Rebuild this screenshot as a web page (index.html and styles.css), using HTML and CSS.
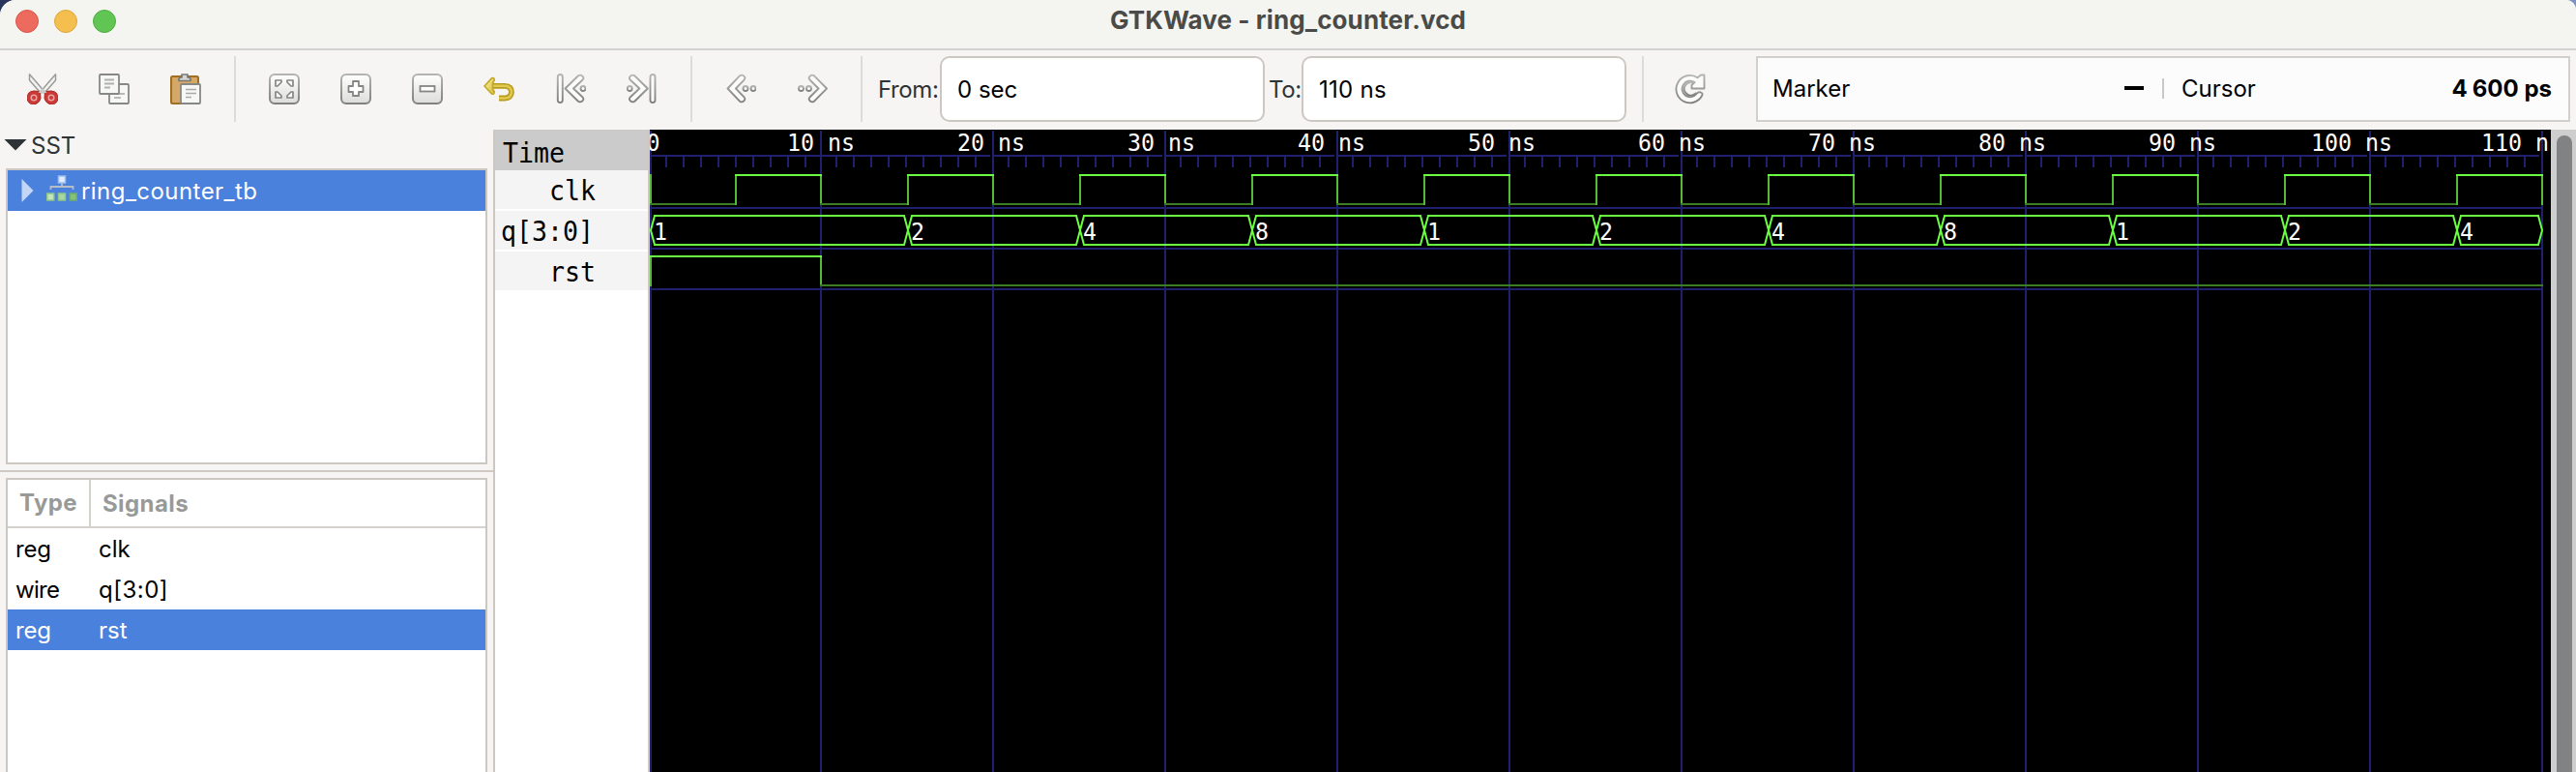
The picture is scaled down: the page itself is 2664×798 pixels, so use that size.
FILE: index.html
```html
<!DOCTYPE html>
<html lang="en">
<head>
<meta charset="utf-8">
<title>GTKWave - ring_counter.vcd</title>
<link rel="stylesheet" href="styles.css">
</head>
<body>
<div class="desktop">
<div class="window">
  <header class="titlebar">
    <div class="lights"><span class="light red"></span><span class="light amber"></span><span class="light green"></span></div>
    <h1 class="title">GTKWave - ring_counter.vcd</h1>
  </header>

  <svg class="defs" width="0" height="0" aria-hidden="true">
    <defs>
      <linearGradient id="btn" x1="0" y1="0" x2="0" y2="1"><stop offset="0" stop-color="#fff"/><stop offset="1" stop-color="#dcdcda"/></linearGradient>
      <linearGradient id="edge" x1="0" y1="0" x2="0" y2="1"><stop offset="0" stop-color="#b4b5b1"/><stop offset="1" stop-color="#80817e"/></linearGradient>
      <linearGradient id="gold" x1="0" y1="0" x2="1" y2="1"><stop offset="0" stop-color="#fbf0a0"/><stop offset="1" stop-color="#d8bc3c"/></linearGradient>
    </defs>
  </svg>

  <div class="toolbar">
    <div class="tools">
      <svg class="icon" viewBox="0 0 32 32">
        <path d="M2.500.8V7L14 20l3-2.500zM29.500.8V7L18 20l-3-2.500z" fill="#f3f4f2" stroke="#9a9c98" stroke-width="1.500" stroke-linejoin="round"/>
        <path d="M13.500 18.500 7 18Q0 18.500 0 25.500q1 6.500 7 6.500 5.500-1 7-6.500zM18.500 18.500l6.500-.5q7 .5 7 7.500-1 6.500-7 6.500-5.500-1-7-6.500z" fill="#c93a37" stroke="#ad2423"/>
        <path d="M11.500 19.500 16 15l4.500 4.500-4.500 1.500z" fill="#c9cac7"/>
        <circle cx="7" cy="25" r="2.800" fill="#c93a37" stroke="#e9a5a3" stroke-width="1.500"/><circle cx="25" cy="25" r="2.800" fill="#c93a37" stroke="#e9a5a3" stroke-width="1.500"/>
      </svg>
      <svg class="icon" viewBox="0 0 32 32">
        <rect x="11" y="11" width="20" height="20" rx="1" fill="#f7f7f6" stroke="#868885" stroke-width="1.800"/>
        <path d="M16 21h11M16 25h7" stroke="#b9bab8" stroke-width="1.800"/>
        <rect x="1" y="1" width="20" height="20" rx="1" fill="#f7f7f6" stroke="#868885" stroke-width="1.800"/>
        <path d="M6 6.500h10M6 10.500h10M6 14.500h6" stroke="#b0b1af" stroke-width="1.800"/>
      </svg>
      <svg class="icon" viewBox="0 0 32 32">
        <rect x="1" y="3" width="28" height="28" rx="1.500" fill="#d6a866" stroke="#a06f24" stroke-width="2"/>
        <path d="M9 7.500V6q0-2 3-2V1h6v3q3 0 3 2v1.500z" fill="#d5d6d3" stroke="#777975" stroke-width="1.700" stroke-linejoin="round"/>
        <rect x="11" y="11" width="20" height="20" rx="1" fill="#f7f7f6" stroke="#868885" stroke-width="1.800"/>
        <path d="M16 16.500h11M16 20.500h11M16 24.500h6" stroke="#a9aaa7" stroke-width="1.600"/>
      </svg>
    </div>
    <div class="tools six">
      <svg class="icon" viewBox="0 0 32 32">
        <rect x="1" y="1" width="30" height="30" rx="5" fill="url(#btn)" stroke="url(#edge)" stroke-width="2"/>
        <path d="M7 7h6v2l-4 4H7zM25 7h-6v2l4 4h2zM7 25h6v-2l-4-4H7zM25 25h-6v-2l4-4h2z" fill="#fff" stroke="#858683" stroke-width="1.700" stroke-linejoin="round"/>
      </svg>
      <svg class="icon" viewBox="0 0 32 32">
        <rect x="1" y="1" width="30" height="30" rx="5" fill="url(#btn)" stroke="url(#edge)" stroke-width="2"/>
        <path d="M13 8h6v5h4.500v6H19v4h-6v-4H8.500v-6H13z" fill="#fff" stroke="#858683" stroke-width="1.800" stroke-linejoin="round"/>
      </svg>
      <svg class="icon" viewBox="0 0 32 32">
        <rect x="1" y="1" width="30" height="30" rx="5" fill="url(#btn)" stroke="url(#edge)" stroke-width="2"/>
        <rect x="8.500" y="13" width="15" height="5.500" fill="#fff" stroke="#858683" stroke-width="1.800"/>
      </svg>
      <svg class="icon" viewBox="0 0 32 32">
        <path d="M9 12.800H22q7 .3 7 6.500-.5 6-7 6.200H16" fill="none" stroke="#b89c22" stroke-width="5.800"/>
        <path d="M9 12.800H22q7 .3 7 6.500-.5 6-7 6.200H16" fill="none" stroke="#e0c94f" stroke-width="2.600"/>
        <path d="M1 13 8.500 4.800Q11 4 11.300 6.500L9.500 10v6l1.800 3Q11 22 8.500 21z" fill="url(#gold)" stroke="#c4a92c" stroke-width="1.700" stroke-linejoin="round"/>
      </svg>
      <svg class="icon outline" viewBox="0 0 32 32">
        <rect x="2.800" y="1" width="5" height="29" rx="2.500"/>
        <path d="M10.500 15.500 24 2.300Q27 .5 29 3.500 30 5 28.300 6.800L19 15.500l9.300 8.700Q30 26 29 27.500 27 30.500 24 28.700z"/><circle cx="29" cy="15.500" r="2.500"/>
      </svg>
      <svg class="icon outline" viewBox="0 0 32 32">
        <rect x="24.500" y="1" width="5" height="29" rx="2.500"/>
        <path d="M21.800 15.500 8.300 2.300Q5.300.5 3.300 3.500 2.300 5 4 6.800l9.300 8.700L4 24.200Q2.300 26 3.300 27.500q2 3 5 1.200z"/><circle cx="3.200" cy="15.500" r="2.500"/>
      </svg>
    </div>
    <div class="tools two">
      <svg class="icon outline" viewBox="0 0 32 32">
        <path d="M2.500 15.500 15 2.300Q18 .5 20 3.500 21 5 19.300 6.800L11 15.500l8.300 8.700Q21 26 20 27.500 18 30.500 15 28.700z"/><circle cx="21" cy="15.500" r="2.500"/><circle cx="29" cy="15.500" r="2.500"/>
      </svg>
      <svg class="icon outline" viewBox="0 0 32 32">
        <path d="M31 15.500 18 2.300Q15 .5 13 3.500 12 5 13.700 6.800L22.500 15.500l-8.800 8.700Q12 26 13 27.500q2 3 5 1.200z"/><circle cx="4.500" cy="15.500" r="2.500"/><circle cx="12.500" cy="15.500" r="2.500"/>
      </svg>
    </div>
    <label class="field"><span class="lbl from">From:</span><span class="entry"><span class="zsec">0 sec</span></span></label>
    <label class="field to"><span class="lbl">To:</span><span class="entry"><span class="ns">110 ns</span></span></label>
    <div class="tools one">
      <svg class="icon outline" viewBox="0 0 32 32">
        <path d="M23.500 4.300A14.200 14.200 0 1 0 28.200 22.800Q29.300 20 26.500 19.300 24 19 22.500 21A8.300 8.300 0 1 1 20.500 9L17.500 12v3.500H30.500V1.500H27z"/>
        <path d="M20.500 9.500Q17 8.500 13.500 10 8.500 13 10 18q3 5.500 8 4.500 3-1 4.500-2.500" fill="none"/>
      </svg>
    </div>
    <div class="readout">
      <span class="marker">Marker</span><span class="dash"></span><span class="bar"></span><span class="cursor">Cursor</span><b class="time">4<i class="thin"></i>600 ps</b>
    </div>
  </div>

  <main class="body">
    <aside class="side">
      <div class="sst"><svg width="24" height="13" viewBox="0 0 24 13"><path d="M.5 1h23L12 12.500z" fill="#2e3436"/></svg><span>SST</span></div>
      <div class="frame tree">
        <div class="node">
          <svg class="arrow" width="13" height="26" viewBox="0 0 13 26"><path d="M.5 1v24L12.500 13z" fill="#c3d6f5"/></svg>
          <svg class="hier" width="32" height="28" viewBox="0 0 32 28">
            <path d="M4.500 15v-3h23v3M16 8v4" fill="none" stroke="#b7bcc6" stroke-width="1.800"/>
            <rect x="12.500" y="1" width="7" height="7" fill="#e1ebf9" stroke="#9dbff0" stroke-width="1.500"/>
            <g stroke="#8fc887" stroke-width="1.500"><rect x=".8" y="19" width="7" height="7" fill="#c4e4bb"/><rect x="12.500" y="19" width="7" height="7" fill="#a9d79d"/><rect x="24.200" y="19" width="7" height="7" fill="#86c277" stroke="#70ad68"/></g>
          </svg>
          <span class="name">ring_counter_tb</span>
        </div>
      </div>
      <div class="split"></div>
      <div class="frame list">
        <div class="row head"><span class="type">Type</span><span class="sig">Signals</span></div>
        <div class="row"><span class="type">reg</span><span class="sig">clk</span></div>
        <div class="row"><span class="type wire">wire</span><span class="sig vec">q[3:0]</span></div>
        <div class="row on"><span class="type">reg</span><span class="sig">rst</span></div>
      </div>
    </aside>
    <section class="names">
      <div class="nm hd"><span>Time</span></div>
      <div class="nm in"><span>clk</span></div>
      <div class="nm"><span>q[3:0]</span></div>
      <div class="nm in"><span>rst</span></div>
    </section>
    <section class="wave"><svg id="wave" width="1966" height="664" viewBox="672 134 1966 664"></svg></section>
    <div class="scroll"><div class="thumb"></div></div>
  </main>
</div>
</div>
<script src="wave.js"></script>
</body>
</html>
```
FILE: styles.css
```css
* { box-sizing: border-box; }
body { margin: 0; font-family: Inter, "Liberation Sans", sans-serif; font-size: 24px; color: #000; }
.desktop { width: 2664px; height: 798px; background: linear-gradient(90deg, #27355c, #7d92c0); overflow: hidden; }
.window { display: flex; flex-direction: column; height: 798px; background: #f6f5f3; border-radius: 16px 10px 0 0; overflow: hidden; }
.defs { display: block; flex: none; }
.titlebar { display: grid; grid-template-columns: 1fr auto 1fr; flex: none; height: 52px; background: #f4f5f0; border-bottom: 2px solid #d2d2d0; }
.lights { display: flex; gap: 16px; padding: 10px 0 0 16px; }
.light { width: 24px; height: 24px; border-radius: 50%; border: 1px solid; }
.red { background: #ed6a5e; border-color: #d9544a; }
.amber { background: #f5bf4f; border-color: #dba63c; }
.green { background: #61c554; border-color: #4dab40; }
.title { margin: 0; font-size: 26px; line-height: 42px; font-weight: 700; letter-spacing: .1px; color: #4a4a48; white-space: nowrap; }

.toolbar { display: flex; flex: none; height: 82px; padding: 6px 6px 8px 0; }
.tools { display: flex; gap: 42px; height: 68px; width: 244px; padding: 18px 0 0 28px; border-right: 2px solid #dcdbd8; }
.six { width: 472px; padding-left: 34px; }
.two { width: 176px; padding-left: 34px; }
.one { width: 116px; border: 0; padding-left: 32px; }
.icon { width: 32px; height: 32px; flex: none; display: block; }
.outline { fill: #fbfbfa; stroke: url(#edge); stroke-width: 1.9; stroke-linejoin: round; }
.field { display: flex; align-items: center; width: 416px; height: 68px; padding-left: 16px; color: #2e3436; white-space: nowrap; }
.field.to { width: 392px; padding-left: 4px; border-right: 2px solid #dcdbd8; }
.lbl { width: 34px; letter-spacing: -.4px; }
.from { width: 64px; }
.entry { display: flex; align-items: center; width: 336px; height: 68px; padding-left: 16px; border: 2px solid #cdc7c2; border-radius: 10px; background: #fff; color: #000; }
.ns { letter-spacing: .3px; }
.readout { display: flex; align-items: center; width: 842px; height: 68px; padding: 0 17px 2px 15px; border: 2px solid #d3d0cb; background: #fcfcfc; white-space: nowrap; }
.marker { width: 364px; }
.dash { width: 20px; height: 4px; background: #000; }
.bar { width: 2px; height: 21px; margin: 0 18px 0 19px; background: #c8c8c8; }
.time { margin-left: auto; font-weight: 700; }
.thin { display: inline-block; width: 5px; }

.body { display: flex; flex: 1; min-height: 0; }
.side { display: flex; flex-direction: column; width: 512px; border-right: 2px solid #cdc7c2; }
.sst { display: flex; align-items: center; gap: 4px; height: 40px; padding: 0 0 9px 4px; color: #2e3436; }
.sst span { padding-top: 1px; }
.frame { width: 498px; margin-left: 6px; border: 2px solid #cdc7c2; background: #fff; }
.tree { height: 306px; }
.node { display: flex; align-items: center; height: 42px; padding-left: 14px; background: #4a81dc; color: #fff; }
.hier { margin: -5px 4px 0 13px; }
.name { padding-top: 1px; letter-spacing: .45px; }
.split { height: 2px; margin: 6px 0; background: #d0c8c2; }
.list { flex: 1; border-bottom: 0; }
.row { display: flex; align-items: center; height: 42px; padding-top: 1px; }
.type { width: 86px; padding-left: 8px; letter-spacing: -.2px; }
.sig { padding-left: 8px; }
.wire { letter-spacing: -.7px; }
.vec { letter-spacing: .5px; }
.on { background: #4a81dc; color: #fff; }
.head { height: 50px; padding: 0; border-bottom: 2px solid #d5d2cd; font-weight: 700; color: #989a9a; }
.head span { letter-spacing: .4px; }
.head .type { height: 48px; line-height: 48px; padding-left: 12px; border-right: 2px solid #d5d2cd; }
.head .sig { padding-left: 12px; }

.names { width: 160px; border-right: 2px solid #cdc7c2; background: #fff; font-family: "DejaVu Sans Mono", monospace; font-size: 29px; }
.nm { height: 40px; margin-bottom: 2px; padding-left: 6px; background: #f4f4f4; line-height: 43px; }
.nm span { display: inline-block; transform: scaleX(.915); transform-origin: 0 50%; }
.in { padding-left: 56px; }
.hd { height: 42px; margin: 0; padding-left: 8px; background: #cbcbcb; line-height: 48px; }
.wave { width: 1966px; background: #000; }
.wave svg { display: block; font-family: "DejaVu Sans Mono", monospace; font-size: 25px; }
.grid { fill: #20206f; }
.hi { fill: #6bff42; }
.lo { fill: #3a7d24; }
.edge { fill: #53b936; }
.bus { fill: none; stroke: #6bff42; stroke-width: 2; }
.txt { fill: #fff; }
.scroll { flex: 1; padding: 6px 4px 0 6px; background: #cecece; }
.thumb { width: 16px; height: 700px; border-radius: 8px; background: #808284; }
```
FILE: wave.js
```js
const svg = document.getElementById('wave');
const NS = 'http://www.w3.org/2000/svg';
const ORIGIN = 672, END = 2628, STEP = 178;

function add(tag, cls, attrs, text) {
  const el = document.createElementNS(NS, tag);
  el.setAttribute('class', cls);
  for (const k in attrs) el.setAttribute(k, attrs[k]);
  if (text) el.textContent = text;
  svg.appendChild(el);
}
const rect = (cls, x, y, width, height) => add('rect', cls, { x, y, width, height });
const label = (text, x, y, adv) =>
  add('text', 'txt', { x, y, textLength: text.length * adv, lengthAdjust: 'spacingAndGlyphs' }, text);

// decade position in pixels; 0 is the left edge of the trace
const at = n => (n === 0 ? ORIGIN : 670 + n * STEP);

// ruler, row separators and grid lines
[214, 256, 298].forEach(y => rect('grid', 674, y, END - 674, 2));
for (let n = 0; n <= 11; n++) {
  rect('grid', at(n), 135, 2, 663);
  if (n === 11) break;
  // from the second decade on, the ruler stops one unit short of the grid line
  rect('grid', at(n), 160, at(n + 1) - at(n) - (n ? 2 : 0), 2);
  for (let k = 0; k < 9; k++) rect('grid', 686 + n * STEP + (n ? 0 : 2) + 18 * k, 162, 2, 11);
}

// clk
rect('edge', ORIGIN, 180, 2, 32);
for (let n = 0; n < 11; n++) {
  const rise = 760 + n * STEP;
  rect('lo', at(n), 210, rise - at(n) + 2, 2);
  rect('edge', rise, 180, 2, 32);
  rect('edge', at(n + 1), 180, 2, 32);
  rect('hi', rise, 180, at(n + 1) - rise + 2, 2);
}

// q[3:0]
const values = ['1', '2', '4', '8', '1', '2', '4', '8', '1', '2', '4'];
values.forEach((v, i) => {
  const a = i ? 761 + i * STEP : 673;
  const b = i === 10 ? 2629 : 761 + (i + 1) * STEP;
  add('path', 'bus', { d: `M${a} 238L${a + 4} 223H${b - 4}L${b} 238L${b - 4} 253H${a + 4}Z` });
  label(v, a + 3, 248, 14);
});

// rst
rect('edge', ORIGIN, 264, 2, 32);
rect('edge', 848, 264, 2, 32);
rect('hi', ORIGIN, 264, 178, 2);
rect('lo', 848, 294, END + 2 - 848, 2);

// time labels advance by 176, slightly less than the grid
label('0', 668.5, 156, 14);
for (let n = 1; n <= 11; n++) {
  label(n * 10 + ' ns', 814 + 176 * (n - 1) - (n > 9 ? 8 : 0), 156, 14);
}
```
